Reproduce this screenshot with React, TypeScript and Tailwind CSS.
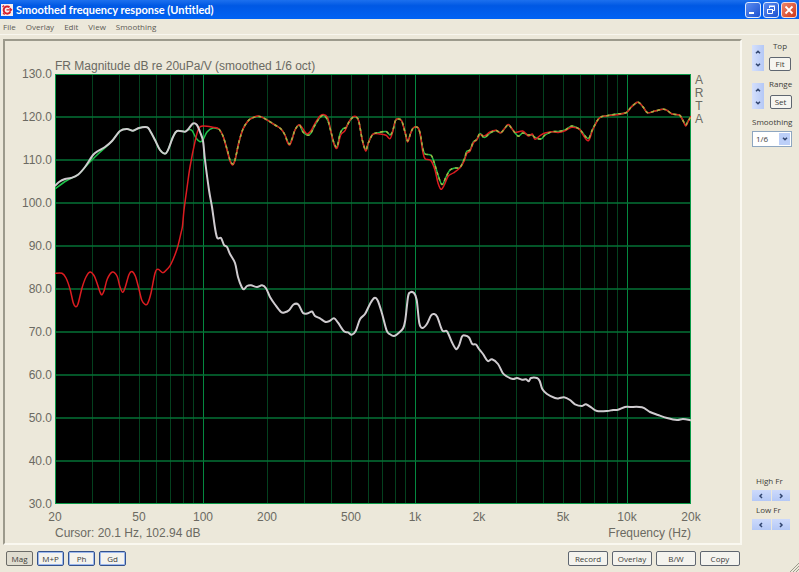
import React from "react";

type Point = [number, number];

// plot area: 3 decades (20 Hz - 20 kHz) across, 100 dB down
const WIDTH = 636;
const HEIGHT = 430;
const LEFT = 55;
const TOP = 74;

const levels = ["130.0", "120.0", "110.0", "100.0", "90.0", "80.0", "70.0", "60.0", "50.0", "40.0", "30.0"];
const frequencies = ["20", "50", "100", "200", "500", "1k", "2k", "5k", "10k", "20k"];
const menus = ["File", "Overlay", "Edit", "View", "Smoothing"];
const modes = ["Mag", "M+P", "Ph", "Gd"];
const actions = ["Record", "Overlay", "B/W", "Copy"];

const bassRise: Point[] = [
  [85, 167], [93, 155], [98, 151], [105, 147], [112, 141], [120, 131], [127, 129], [133, 130.7], [139, 128],
  [147, 127.3], [150, 130.7], [155, 140], [160, 150], [165, 153.7], [168, 150], [173, 137], [177, 131], [185, 131.7], [188, 129.5],
];

const nearField: Point[] = [
  [55, 186], [59, 182], [65, 179], [71, 178], [78, 174.7], ...bassRise,
  [193, 123.5], [197, 125], [200, 132], [203, 141], [205, 160], [209, 190], [212, 207], [215, 228], [217.3, 238],
  [221, 238], [224, 245], [227, 247], [230, 254], [235, 263], [238, 277], [241.7, 287], [244, 289.3], [247, 286],
  [251, 285.3], [257, 287], [262, 285.3], [266, 288.3], [270, 297], [275, 304.5], [281, 312], [285, 312.3],
  [289, 310.3], [293.5, 304.5], [298.3, 304.5], [303, 313], [308, 313.3], [312, 311.5], [315, 316], [320, 318.3],
  [325, 321.7], [329, 321.3], [334, 318.3], [338, 322.7], [344, 331.3], [348, 332.3], [351.7, 334.7], [355.7, 331],
  [360, 319.3], [365, 314], [370, 304], [374.3, 298], [377.7, 300.5], [382, 313.5], [386.7, 330.7], [390, 334.3],
  [394, 336], [398, 333.5], [403, 328.5], [405.3, 320], [408, 297], [410, 292.5], [414, 293], [416.7, 300],
  [419.3, 323], [422.3, 328], [426.7, 324.3], [431, 315.5], [434, 314], [437.3, 317], [442.3, 330.5], [447, 331.3],
  [451.7, 341.7], [456, 349], [459, 345.5], [462, 336.5], [465, 335.5], [469, 337.5], [472.3, 344], [476, 344.5],
  [479, 349], [483, 354], [487.7, 361], [492, 359.3], [498, 364], [502.7, 373], [507, 376.5], [513, 379],
  [517, 378], [522, 379.7], [526, 379.3], [528.7, 381.3], [531, 378], [537, 378], [539.7, 381], [542.3, 389],
  [547, 394], [555, 398], [559, 398.3], [564, 397.3], [570, 400], [575, 404.3], [582, 406], [586, 404.3],
  [592, 408], [597, 411], [607, 411], [613, 410], [618, 409.7], [625, 407], [630, 407], [642, 407.3],
  [650, 412], [658, 415], [667, 418], [677, 420], [683, 419], [691, 420.3],
];

const farField: Point[] = [
  [55, 273.3], [62, 273.3], [66, 278], [70, 289], [73.3, 303], [75.7, 306.7], [78, 304], [82, 288], [86, 277],
  [90, 272], [94, 275.5], [97, 283], [100, 292], [102, 294.7], [104.3, 290], [107.3, 279], [112.3, 272], [117, 276],
  [120, 287], [122.7, 292.3], [125.3, 287], [129, 274.5], [132, 271.5], [135.3, 276], [138.7, 288], [141.7, 300],
  [145, 304.3], [147.7, 303.3], [151, 293], [155, 273.3], [158, 269.3], [163, 272.7], [167, 269.3], [171, 264],
  [177, 249], [181, 233], [182.5, 226], [184, 210], [187, 188], [190, 167], [195, 141.7], [198.5, 129], [203, 126],
  [213, 127.3], [219, 129], [223, 136], [227, 150], [230, 161], [232.7, 165], [235, 160], [239, 142], [243, 129],
  [248, 121], [252, 118], [258, 116], [263, 117.7], [275, 125], [281, 129], [285, 135], [287.3, 142], [289.7, 145],
  [292.3, 139], [295, 130], [299.3, 124.7], [303, 129], [307, 134], [311, 130.7], [315, 123.3], [320, 116],
  [323.3, 114.5], [327.3, 117], [330, 127], [333.3, 142], [337, 148.3], [340.7, 135], [345, 130.7], [348.3, 123],
  [352.7, 117], [356.7, 117], [359, 122], [362.3, 140], [365.7, 151], [368.3, 143], [372.7, 134.3], [380, 134],
  [386, 135.3], [390, 138.7], [392.7, 131.7], [395.3, 121], [398, 118.5], [401.7, 121], [405, 132], [407.7, 142],
  [410.7, 133], [413.3, 128], [417.7, 127.3], [420, 133], [422.7, 151], [425, 158.7], [431, 160.7], [435, 170],
  [438, 183], [441, 189.3], [444.3, 185], [448.3, 176], [453.3, 173], [460, 167.7], [464.3, 160.7], [466.7, 153.5],
  [470, 151], [473.3, 143], [476.7, 140], [480, 134.7], [484.3, 136], [490, 132], [496, 130.3], [501, 132.7],
  [507.7, 124.7], [511, 127.3], [515, 132.3], [522.7, 131], [528.3, 136], [532.3, 134], [535, 139.3], [540, 135.7],
  [545, 133], [552, 131.7], [558, 132.5], [565, 130.7], [571.7, 127.3], [579.3, 129], [582, 133.3], [588.3, 140.7],
  [592.7, 130], [599.3, 118], [607, 115.7], [617, 114.7], [626, 112.7], [631, 107.3], [636.7, 102.5], [640, 103.3],
  [644, 108.3], [647.7, 112.7], [655, 111], [663, 109.3], [667, 110.3], [672, 114], [679.3, 115], [682.7, 120],
  [685.7, 126], [688, 122], [691, 116],
];

const combinedBass: Point[] = [
  [55, 189], [66, 181], [78, 174.7], [88, 164], [97, 155], [107, 146], [112, 141], ...bassRise.slice(5),
  [192, 130.5], [196, 138], [200, 141.7], [203, 140], [207, 132], [213, 128], [219, 129],
];

const combined: Point[] = [
  [219, 129], [223, 136], [227, 149], [230, 160], [232.7, 164], [235, 160], [239, 142], [243, 129], [248, 121],
  [252, 118], [258, 116.5], [263, 117.7], [275, 125], [281, 129], [285, 135], [287.3, 141], [289.7, 144],
  [292.3, 138], [295, 130], [299.3, 125], [303, 132], [308, 135.3], [311, 133], [315, 125], [320, 117.5],
  [324, 115.5], [328, 121], [331, 132], [334, 143], [337, 147], [340, 134], [342.7, 129], [346, 127.5], [349, 122],
  [352.7, 117.5], [356.7, 117.5], [359, 122], [362.3, 140], [365.7, 150], [368.3, 143], [372.7, 134.5], [378, 132.7],
  [386, 131.5], [390, 135], [392.7, 131], [395.3, 121], [398, 119], [401.7, 121], [405, 132], [407.7, 141],
  [410.7, 133], [413.3, 128], [417.7, 127.5], [420, 133], [422.7, 148], [425, 154], [431, 155.3], [434, 162],
  [438, 175], [442, 184.5], [446, 177], [450, 170], [455, 168], [460, 167.5], [464.3, 159], [466.7, 151.5],
  [470, 150], [473.3, 142], [476.7, 139.5], [480, 133.5], [484.3, 137.5], [490, 133], [496, 130.5], [501, 132.5],
  [507.7, 125], [511, 127.5], [518, 136], [522.7, 133], [528.3, 135], [532.3, 135], [535, 137.5], [541, 139],
  [545, 135], [552, 131.7], [558, 131.5], [565, 130], [571.7, 126], [579.3, 129], [582, 132], [588.3, 138.5],
  [592.7, 129], [599.3, 118], [607, 115.7], [617, 114], [626, 112.7], [631, 107.3], [636.7, 102.5], [640, 103.3],
  [644, 108.3], [647.7, 112.7], [655, 111], [663, 109.3], [667, 110.3], [672, 114], [679.3, 115], [682.7, 120],
  [685.7, 125], [688, 121], [691, 117],
];

function smooth(points: Point[]) {
  let d = `M${points[0][0]} ${points[0][1]}`;
  for (let i = 0; i < points.length - 1; i++) {
    const p0 = points[Math.max(i - 1, 0)];
    const p1 = points[i];
    const p2 = points[i + 1];
    const p3 = points[Math.min(i + 2, points.length - 1)];
    d += `C${p1[0] + (p2[0] - p0[0]) / 6} ${p1[1] + (p2[1] - p0[1]) / 6} ${p2[0] - (p3[0] - p1[0]) / 6} ${p2[1] - (p3[1] - p1[1]) / 6} ${p2[0]} ${p2[1]}`;
  }
  return d;
}

const hertz: number[] = [];
for (const decade of [10, 100, 1000, 10000]) {
  for (let n = 1; n < 10; n++) {
    const f = n * decade;
    if (f > 20 && f < 20000) hertz.push(f);
  }
}

type CurveProps = { points: Point[]; color: string; width?: number; dash?: string };

const Curve = ({ points, color, width = 1.5, dash }: CurveProps) => (
  <path
    d={smooth(points)}
    fill="none"
    stroke={color}
    strokeWidth={width}
    strokeLinejoin="round"
    strokeDasharray={dash}
    vectorEffect="non-scaling-stroke"
  />
);

const Plot = () => (
  <svg
    viewBox={`${LEFT} ${TOP} ${WIDTH} ${HEIGHT}`}
    preserveAspectRatio="none"
    className="block h-full w-full bg-black"
    role="img"
    aria-label="FR Magnitude"
  >
    {hertz.map((f) => {
      const x = Math.round(LEFT + (Math.log10(f / 20) / 3) * WIDTH) + 0.5;
      const major = f === 100 || f === 1000 || f === 10000;
      return <line key={f} x1={x} x2={x} y1={TOP} y2={TOP + HEIGHT} stroke={major ? "#04883f" : "#04401e"} />;
    })}
    {levels.slice(1, -1).map((level, i) => {
      const y = TOP + (i + 1) * 43;
      return <line key={level} x1={LEFT} x2={LEFT + WIDTH} y1={y} y2={y} stroke="#047236" strokeWidth="1.5" />;
    })}
    <rect x={LEFT} y={TOP} width={WIDTH} height={HEIGHT} fill="none" stroke="#0a9a48" strokeWidth="2" />
    <Curve points={combinedBass} color="#1fc04a" />
    <Curve points={combined} color="#1fc04a" />
    <Curve points={farField} color="#dc1c20" />
    <Curve points={combined} color="#a8b040" dash="3 3" />
    <Curve points={nearField} color="#cfcbcf" width={2} />
  </svg>
);

const Chevron = ({ d }: { d: string }) => (
  <svg viewBox="0 0 6 6" className="h-[6px] w-[6px]" fill="none" stroke="#31456f" strokeWidth="1.5">
    <path d={d} />
  </svg>
);

const up = "M1 4.2 3 2.2 5 4.2";
const down = "M1 1.8 3 3.8 5 1.8";
const left = "M4 1 2 3 4 5";
const right = "M2 1 4 3 2 5";

const VerticalSpinner = ({ label }: { label: string }) => (
  <div className="flex h-[26px] w-[12px] flex-col bg-gradient-to-r from-[#d5e0fc] to-[#b4c8f6]">
    <button aria-label={`${label} up`} className="flex flex-1 items-center justify-center">
      <Chevron d={up} />
    </button>
    <button aria-label={`${label} down`} className="flex flex-1 items-center justify-center">
      <Chevron d={down} />
    </button>
  </div>
);

const HorizontalSpinner = ({ label }: { label: string }) => (
  <div className="mt-1 flex h-[11px] w-[38px] gap-px">
    <button aria-label={`${label} down`} className="flex flex-1 items-center justify-center bg-gradient-to-b from-[#cddafb] to-[#b4c8f6]">
      <Chevron d={left} />
    </button>
    <button aria-label={`${label} up`} className="flex flex-1 items-center justify-center bg-gradient-to-b from-[#cddafb] to-[#b4c8f6]">
      <Chevron d={right} />
    </button>
  </div>
);

const RangeControl = ({ label, action }: { label: string; action: string }) => (
  <div className="flex h-[30px] items-end gap-[5px]">
    <VerticalSpinner label={label} />
    <div className="flex h-full flex-col items-center justify-between">
      <span>{label}</span>
      <button className="h-[14px] w-[22px] rounded-[2px] border border-[#5f6670] bg-[#f6f5f0] leading-none">{action}</button>
    </div>
  </div>
);

const TitleBar = () => (
  <header className="flex h-[19px] shrink-0 items-center bg-gradient-to-b from-[#1c70ee] via-[#0058e4] via-30% to-[#0062f4] pr-[2px]">
    <svg viewBox="0 0 12 12" className="ml-[1px] h-[12px] w-[12px] shrink-0">
      <rect width="12" height="12" fill="#f6eeee" />
      <path d="M8.5 3.2A3.6 3.6 0 1 0 9.3 8" fill="none" stroke="#d8202c" strokeWidth="2" />
      <path d="M5.5 5.8h5M8.6 3.8l2 2-2 2M3 1.5 1.5 3M2 9l1.6 1.6" fill="none" stroke="#d8202c" strokeWidth="1.2" />
    </svg>
    <h1 className="ml-[3px] flex-1 text-[11px] font-bold leading-none text-white [font-family:Lato,sans-serif]">
      Smoothed frequency response (Untitled)
    </h1>
    <div className="flex gap-[2px]">
      <button aria-label="Minimize" className="h-[16px] w-[16px] rounded-[3px] border border-[#dce8fc] bg-gradient-to-br from-[#5c8cf0] to-[#1c50d0]">
        <svg viewBox="0 0 14 14"><path d="M3 10h5" stroke="#fff" strokeWidth="2" /></svg>
      </button>
      <button aria-label="Restore" className="h-[16px] w-[16px] rounded-[3px] border border-[#dce8fc] bg-gradient-to-br from-[#5c8cf0] to-[#1c50d0]">
        <svg viewBox="0 0 14 14" fill="none" stroke="#fff">
          <path d="M5.5 5V3.5h5v4H9" />
          <path d="M3.5 6.5h5v4h-5zM3 6.5h6M5 3h6" />
        </svg>
      </button>
      <button aria-label="Close" className="h-[16px] w-[16px] rounded-[3px] border border-[#f6dcd6] bg-gradient-to-br from-[#ee8468] to-[#cc3414]">
        <svg viewBox="0 0 14 14"><path d="M3.5 3.5l7 7M10.5 3.5l-7 7" stroke="#fff" strokeWidth="1.8" /></svg>
      </button>
    </div>
  </header>
);

const ChartPanel = () => (
  <section className="grid min-w-0 flex-1 grid-cols-[50px_1fr_49px] grid-rows-[33px_1fr_39px] border-2 border-b-[#faf8f0] border-l-[#9c9a8c] border-r-[#faf8f0] border-t-[#9c9a8c] text-[12px] leading-4 text-[#6b6a62] [font-family:'Liberation_Sans',Arial,sans-serif]">
    <h2 className="col-span-2 col-start-2 self-end">FR Magnitude dB re 20uPa/V (smoothed 1/6 oct)</h2>
    <div className="col-start-1 row-start-2 -my-2 flex flex-col justify-between pr-[3px] text-right">
      {levels.map((level) => (
        <span key={level}>{level}</span>
      ))}
    </div>
    <div className="col-start-2 row-start-2 h-full min-h-0 overflow-hidden">
      <Plot />
    </div>
    <div className="col-start-3 row-start-2 flex w-[16px] flex-col items-center leading-[13px]">
      {["A", "R", "T", "A"].map((letter, i) => (
        <span key={i}>{letter}</span>
      ))}
    </div>
    <div className="col-start-2 row-start-3">
      <div className="grid grid-cols-[84fr_64fr_64fr_84fr_64fr_64fr_84fr_64fr_64fr_0px] pt-[5px]">
        {frequencies.map((f) => (
          <span key={f} className="flex w-0 justify-center">{f}</span>
        ))}
      </div>
      <div className="flex justify-between">
        <span>Cursor: 20.1 Hz, 102.94 dB</span>
        <span>Frequency (Hz)</span>
      </div>
    </div>
  </section>
);

const SidePanel = () => (
  <aside className="flex w-[57px] shrink-0 flex-col justify-between pb-[15px] pl-[10px] pt-[2px]">
    <div className="flex flex-col">
      <RangeControl label="Top" action="Fit" />
      <div className="mt-2">
        <RangeControl label="Range" action="Set" />
      </div>
      <label htmlFor="smoothing" className="mt-2">Smoothing</label>
      <div className="relative mt-1 h-[16px] w-[40px]">
        <select id="smoothing" defaultValue="1/6" className="h-full w-full appearance-none border border-[#8ea6c0] bg-white pl-[3px] leading-none">
          <option>1/3</option>
          <option>1/6</option>
          <option>1/12</option>
        </select>
        <span className="pointer-events-none absolute inset-y-[2px] right-[2px] flex w-[11px] items-center justify-center bg-[#bccff8]">
          <Chevron d={down} />
        </span>
      </div>
    </div>
    <div className="flex flex-col">
      <span className="pl-1">High Fr</span>
      <HorizontalSpinner label="High Fr" />
      <span className="mt-1 pl-1">Low Fr</span>
      <HorizontalSpinner label="Low Fr" />
    </div>
  </aside>
);

const BottomBar = () => (
  <footer className="relative flex h-[27px] shrink-0 items-center justify-between pl-[6px] pr-[59px]">
    <div className="flex gap-1">
      {modes.map((mode) => (
        <button
          key={mode}
          aria-pressed={mode === "Mag"}
          className={
            mode === "Mag"
              ? "h-[15px] w-[27px] rounded-[2px] border border-[#6c6c68] bg-[#e0ddd0] leading-none"
              : "h-[15px] w-[27px] rounded-[2px] border border-[#34528c] bg-[#f4f3ee] leading-none shadow-[inset_0_0_0_1px_#9cb8ee]"
          }
        >
          {mode}
        </button>
      ))}
    </div>
    <div className="flex gap-1">
      {actions.map((action) => (
        <button key={action} className="h-[15px] w-[40px] rounded-[2px] border border-[#5f6670] bg-[#f4f3ee] leading-none">
          {action}
        </button>
      ))}
    </div>
    <svg viewBox="0 0 9 9" className="absolute bottom-0 right-0 h-[9px] w-[9px]" stroke="#9c9a8c">
      <path d="M0 9 9 0M3 9l6-6M6 9l3-3" />
    </svg>
  </footer>
);

export default function App() {
  return (
    <div className="flex h-screen flex-col bg-[#ece8da] text-[8px] leading-[10px] text-[#3c3c38] [font-family:'Open_Sans','Noto_Sans',sans-serif]">
      <TitleBar />
      <nav className="flex h-[16px] shrink-0 items-center gap-[10px] border-b border-[#f8f6ee] pl-[3px] text-[#5c5a54]">
        {menus.map((menu) => (
          <button key={menu}>{menu}</button>
        ))}
      </nav>
      <main className="flex min-h-0 flex-1 pl-[3px] pt-[4px]">
        <ChartPanel />
        <SidePanel />
      </main>
      <BottomBar />
    </div>
  );
}
